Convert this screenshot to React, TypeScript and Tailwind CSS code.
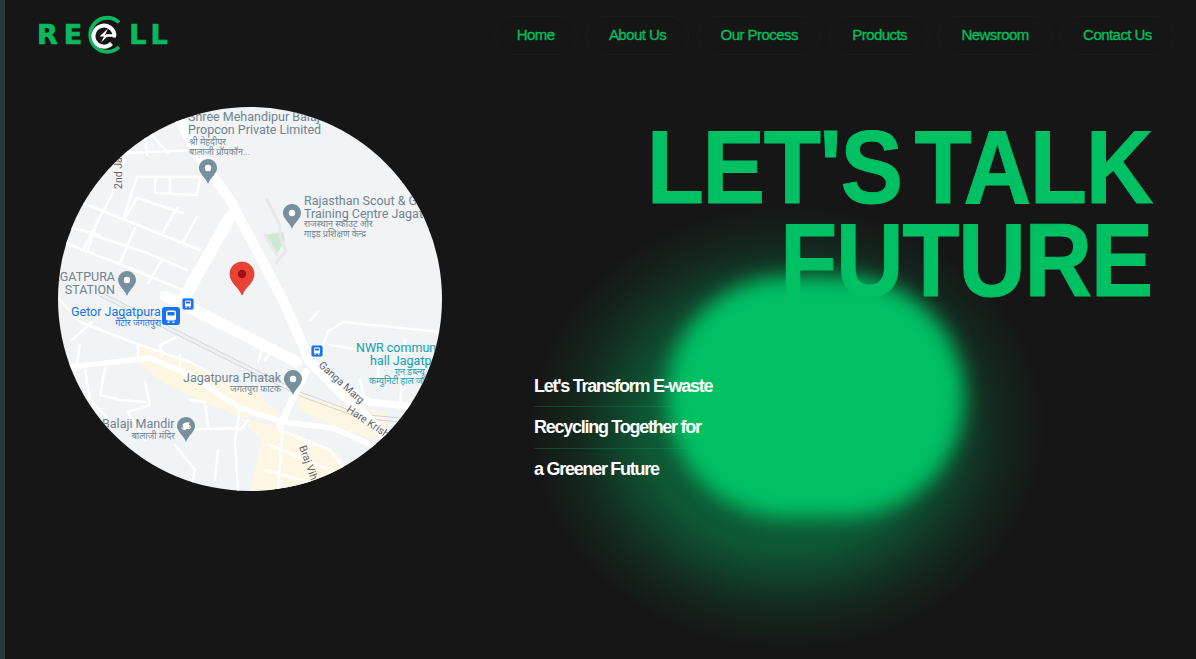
const navLinks = ["Home", "About Us", "Our Process", "Products", "Newsroom", "Contact Us"];
const taglines = ["Let's Transform E-waste", "Recycling Together for", "a Greener Future"];

// thin white side streets, in page coordinates
const streets = [
  "127,150 113,193 100,217 83,250",
  "137,177 123,220",
  "137,177 200,177",
  "155,178 155,193 197,195 200,178",
  "170,178 170,193",
  "83,203 200,250",
  "137,198 183,213",
  "125,218 137,198",
  "178,207 163,232",
  "197,217 183,242",
  "93,235 147,253",
  "98,220 88,250",
  "65,243 117,263 183,290",
  "145,252 187,270",
  "162,260 148,283",
  "135,228 120,263",
  "150,133 168,153",
  "127,153 197,150",
  "145,137 147,155",
  "60,225 100,235",
  "60,300 80,322 140,345",
  "72,340 92,322",
  "80,345 76,370",
  "140,345 190,362 240,390",
  "138,345 138,358",
  "160,345 175,338",
  "162,355 160,345",
  "180,365 180,355",
  "258,362 262,350",
  "85,370 90,400 110,420",
  "105,368 100,395 120,400",
  "120,400 145,402",
  "145,382 150,405 128,412 145,440",
  "190,400 205,402 208,425",
  "225,428 240,430 248,420",
  "240,408 235,440 238,491",
  "175,430 240,428",
  "175,445 195,470 190,491",
  "218,450 215,480",
  "283,422 278,491",
  "280,430 330,450 345,470",
  "270,445 330,470",
  "310,440 305,460",
  "265,470 320,485",
  "327,332 343,322 440,332",
  "328,332 320,352",
  "330,345 360,350",
  "380,340 378,380",
  "405,340 400,405",
  "360,380 365,400",
  "310,320 318,312",
  "275,345 265,360",
];

const Pin = ({ x, y }: { x: number; y: number }) => (
  <g transform={`translate(${x - 9} ${y - 25})`}>
    <path d="M9 0C4 0 0 4 0 9c0 6 6.5 9 9 16 2.500-7 9-10 9-16 0-5-4-9-9-9z" fill="#78909c" />
    <circle cx="9" cy="9" r="3.200" fill="#fff" />
  </g>
);

const BusIcon = ({ x, y }: { x: number; y: number }) => (
  <g transform={`translate(${x} ${y})`}>
    <rect width="12" height="12" rx="2" fill="#1a73e8" stroke="#fff" strokeWidth="0.800" />
    <rect x="3" y="2.500" width="6" height="6" rx="1" fill="#fff" />
    <rect x="3.800" y="3.500" width="4.400" height="2" fill="#1a73e8" />
    <rect x="3.500" y="8.500" width="1.300" height="1.300" fill="#fff" />
    <rect x="7.200" y="8.500" width="1.300" height="1.300" fill="#fff" />
  </g>
);

const MapLabel = ({ x, y, children, size = 12.5, color = "#6f8391", anchor = "start" }: {
  x: number;
  y: number;
  children: string;
  size?: number;
  color?: string;
  anchor?: "start" | "end";
}) => (
  <text x={x} y={y} fontSize={size} fill={color} textAnchor={anchor} fontFamily="Roboto, 'Noto Sans', sans-serif">
    {children}
  </text>
);

const RoadLabel = ({ x, y, angle, children }: { x: number; y: number; angle: number; children: string }) => (
  <text
    transform={`translate(${x} ${y}) rotate(${angle})`}
    fontSize="10.500"
    fill="#5f6368"
    fontFamily="Roboto, 'Noto Sans', sans-serif"
  >
    {children}
  </text>
);

const MapDrawing = () => (
  <svg viewBox="58 107 384 384" className="w-full h-full block">
    <rect x="58" y="107" width="384" height="384" fill="#f2f3f5" />

    {/* beige built up area */}
    <path d="M137 343l26 8 60 28 34 14 24 24-40 0-40-16-40-20-24-20z" fill="#fdf6e3" />
    <path d="M240 418l43 10 57 27 5 23-25 12-70 1 12-51z" fill="#fdf6e3" />
    <path d="M300 395l30 8 55 10 5 25-30-2-60-25z" fill="#fdf6e3" />

    {/* park */}
    <path d="M265 235l18-3 2 8-8 14z" fill="#cfe8d3" />
    <path d="M267 200l13 25 0 12 6 14-10 12M265 235l12 20" fill="none" stroke="#e6e8ea" strokeWidth="3" strokeLinecap="round" />

    {/* rail lines */}
    <path d="M100 292l200 100 60 22 80 8" fill="none" stroke="#c9cccf" strokeWidth="0.800" />
    <path d="M100 296l200 100 60 22 80 8" fill="none" stroke="#c9cccf" strokeWidth="0.800" />

    {/* side streets */}
    {streets.map((points) => (
      <polyline
        key={points}
        points={points}
        fill="none"
        stroke="#fff"
        strokeWidth="2.500"
        strokeLinecap="round"
        strokeLinejoin="round"
      />
    ))}

    {/* main roads */}
    <g fill="none" stroke="#fff" strokeLinejoin="round" strokeLinecap="round">
      <polyline points="60,368 150,358 190,375 240,408 283,422 333,428 395,455" strokeWidth="5.500" />
      <polyline points="165,296 183,304 297,362" strokeWidth="11" />
      <polyline points="230,217 183,300" strokeWidth="12" />
      <polyline points="172,107 200,158 230,200 283,300 310,362 395,445" strokeWidth="10" />
      <polyline points="340,385 370,402 445,410" strokeWidth="7" />
      <polyline points="306,372 280,425" strokeWidth="7" />
    </g>

    <MapLabel x={188} y={121}>Shree Mehandipur Balaji</MapLabel>
    <MapLabel x={188} y={134}>Propcon Private Limited</MapLabel>
    <MapLabel x={189} y={145} size={9}>श्री मेहंदीपर</MapLabel>
    <MapLabel x={189} y={155} size={9}>बालाजी प्रॉपकॉन...</MapLabel>
    <MapLabel x={304} y={205}>Rajasthan Scout &amp; G</MapLabel>
    <MapLabel x={304} y={218}>Training Centre Jagat</MapLabel>
    <MapLabel x={304} y={227} size={9}>राजस्थान स्काउट और</MapLabel>
    <MapLabel x={304} y={237} size={9}>गाइड प्रशिक्षण केन्द्र</MapLabel>
    <MapLabel x={115} y={281} anchor="end">JAGATPURA</MapLabel>
    <MapLabel x={115} y={294} anchor="end">STATION</MapLabel>
    <MapLabel x={71} y={316} color="#1a73e8">Getor Jagatpura</MapLabel>
    <MapLabel x={161} y={326} size={9} color="#1a73e8" anchor="end">गैटोर जगतपुरा</MapLabel>
    <MapLabel x={356} y={352} color="#129eaf">NWR community</MapLabel>
    <MapLabel x={370} y={365} color="#129eaf">hall Jagatpura</MapLabel>
    <MapLabel x={395} y={375} size={9} color="#129eaf">एन.डब्ल्यू.आर</MapLabel>
    <MapLabel x={369} y={384} size={9} color="#129eaf">कम्युनिटी हाल जगतपुरा</MapLabel>
    <MapLabel x={183} y={382}>Jagatpura Phatak</MapLabel>
    <MapLabel x={281} y={392} size={9} anchor="end">जगतपुरा फाटक</MapLabel>
    <MapLabel x={102} y={428}>Balaji Mandir</MapLabel>
    <MapLabel x={175} y={439} size={9} anchor="end">बालाजी मंदिर</MapLabel>

    <RoadLabel x={318} y={366} angle={42}>Ganga Marg</RoadLabel>
    <RoadLabel x={346} y={411} angle={34}>Hare Krishna Marg</RoadLabel>
    <RoadLabel x={299} y={447} angle={70}>Braj Vihar</RoadLabel>
    <RoadLabel x={122} y={189} angle={-90}>2nd Jaipur</RoadLabel>

    <Pin x={208} y={184} />
    <Pin x={292} y={229} />
    <Pin x={127} y={296} />
    <Pin x={293} y={395} />
    <Pin x={186} y={442} />
    <text x="186" y="431" fontSize="11" textAnchor="middle" fill="#fff" fontFamily="'Noto Sans', sans-serif">ॐ</text>

    <BusIcon x={182} y={298} />
    <BusIcon x={311} y={345} />
    <g transform="translate(162 307)">
      <rect width="18" height="18" rx="3" fill="#1a73e8" />
      <rect x="4" y="3.500" width="10" height="10" rx="2" fill="#fff" />
      <rect x="5.500" y="5" width="7" height="3.500" fill="#1a73e8" />
      <path d="M5.500 14.500h2v1.500h-2zM10.500 14.500h2v1.500h-2z" fill="#fff" />
    </g>

    <g transform="translate(230 262)">
      <path d="M12 0C5.300 0 0 5.300 0 12c0 9 9 13 12 21 3-8 12-12 12-21C24 5.300 18.700 0 12 0z" fill="#ea4335" stroke="#c5221f" strokeWidth="0.600" />
      <circle cx="12" cy="12" r="4.200" fill="#a50e0e" />
    </g>
  </svg>
);

const LogoMark = () => (
  <svg viewBox="0 0 36 40" className="ml-[-2px] mr-[7px] h-[40px] w-[36px] shrink-0">
    <path d="M33 7.500A17 17 0 1 0 33 32" fill="none" stroke="#0cb85e" strokeWidth="3.800" />
    <path d="M30 20.500H28.500A10.500 10.500 0 1 0 25.500 28.500" fill="none" stroke="#fff" strokeWidth="4" />
    <path d="M22 13.500l-8.500 8h4.500l-3 6 8-7.500h-4z" fill="#fff" />
    <path d="M20 20.500H30" stroke="#fff" strokeWidth="2.600" />
  </svg>
);

const App = () => {
  return (
    <div className="relative flex h-[659px] w-full overflow-hidden bg-[#161616] font-['Liberation_Sans',Arial,sans-serif]">
      <div className="w-[5px] shrink-0 bg-[#26393f]" />

      {/* green glow behind the text */}
      <div className="absolute left-[530px] top-[205px] h-[445px] w-[515px] rounded-full bg-[radial-gradient(closest-side,rgba(0,192,100,0.58),rgba(0,192,100,0.38)_55%,rgba(0,192,100,0.1)_82%,transparent)]" />
      <div className="absolute left-[667px] top-[277px] h-[240px] w-[297px] rounded-full bg-[#00c064] blur-[10px]" />

      <div className="relative flex min-w-0 flex-1 flex-col">
        <header className="flex h-[69px] items-center justify-between pl-[32px] pr-[21px]">
          <div className="flex items-center font-['DejaVu_Sans',sans-serif] text-[27px] font-bold leading-none text-[#0cb85e] [-webkit-text-stroke:0.7px_#0cb85e]">
            <span className="tracking-[6px]">RE</span>
            <LogoMark />
            <span className="tracking-[4px]">LL</span>
          </div>
          <nav className="flex gap-2 pt-[1px]">
            {navLinks.map((link) => (
              <a
                key={link}
                className="flex h-[39px] items-center rounded-full border border-[#1b1b1b] px-[22.2px] text-[15px] tracking-[-0.55px] text-[#00c060] [-webkit-text-stroke:0.3px_#00c060]"
              >
                {link}
              </a>
            ))}
          </nav>
        </header>

        <main className="flex flex-1 pl-[53px] pt-[38px]">
          <div className="h-[384px] w-[384px] shrink-0 overflow-hidden rounded-full">
            <MapDrawing />
          </div>

          <div className="flex flex-1 flex-col pr-[44px]">
            <h1 className="mt-[14px] origin-right scale-x-[0.91] text-right text-[103px] font-bold leading-[93px] tracking-[-1.5px] [word-spacing:-13px] text-[#00c064] [-webkit-text-stroke:1px_#00c064]">
              LET'S TALK
              <br />
              FUTURE
            </h1>
            <ul className="ml-[92px] mt-[58.5px] w-[180px]">
              {taglines.map((line, i) => (
                <li
                  key={line}
                  className={`whitespace-nowrap text-[18px] font-bold leading-[40.5px] tracking-[-1.27px] text-white ${
                    i < taglines.length - 1 ? "border-b border-[#00c06440]" : ""
                  }`}
                >
                  {line}
                </li>
              ))}
            </ul>
          </div>
        </main>
      </div>
    </div>
  );
};

export default App;
